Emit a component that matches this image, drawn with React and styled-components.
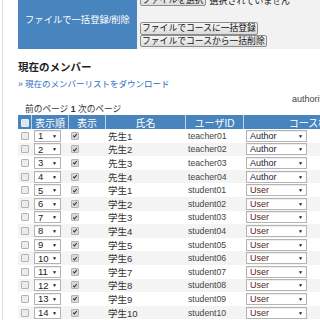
import React from 'react'
import styled, { createGlobalStyle } from 'styled-components'

const GlobalStyle = createGlobalStyle`
  html, body {
    margin: 0;
    padding: 0;
    background: #fff;
    overflow: hidden;
  }
  body {
    font-family: "Liberation Sans", "Noto Sans CJK JP", sans-serif;
    color: #333;
  }
`

const Page = styled.div`
  margin-left: 2px;
  border-left: 1px solid #dcdcdc;
  padding-left: 15px;
  width: 400px;
  min-height: 340px;
`

const Upload = styled.div`
  display: grid;
  grid-template-columns: 119px 1fr;
  margin-top: -12px;
`

const UploadLabel = styled.div`
  background: #4884be;
  color: #fff;
  font-size: 9.3px;
  display: flex;
  align-items: center;
  justify-content: center;
`

const UploadBody = styled.div`
  background: #f2f2f2;
  padding: 6px 3px 2px 3px;
`

const FileRow = styled.div`
  display: flex;
  align-items: center;
  gap: 4px;
  height: 12px;
  margin-bottom: 16px;
  font-size: 9px;
  color: #222;
`

const Button = styled.button`
  display: block;
  box-sizing: border-box;
  height: ${p => (p.$small ? '12px' : '12.5px')};
  padding: 0 1px;
  margin: 0;
  font-family: inherit;
  font-size: 8.8px;
  line-height: 10px;
  color: #111;
  border: 1px solid #8d8d8d;
  border-radius: 2px;
  background: linear-gradient(#f6f6f6, #dcdcdc);
`

const Heading = styled.h3`
  margin: 11px 0 0;
  font-size: 10.5px;
  line-height: 14px;
  font-weight: bold;
  color: #222;
`

const DownloadLink = styled.a`
  display: block;
  margin-top: 4px;
  font-size: 8.5px;
  line-height: 12px;
  color: #2c6cc0;
  text-decoration: none;
`

const AuthNote = styled.div`
  margin-top: 5px;
  padding-left: 274px;
  font-size: 9px;
  line-height: 9px;
  color: #444;
  white-space: nowrap;
`

const Pager = styled.div`
  padding-left: 7px;
  font-size: 8.7px;
  line-height: 10px;
  color: #333;
`

const Columns = '13px 37px 37px 80px 58px 140px'

const HeadRow = styled.div`
  display: grid;
  grid-template-columns: ${Columns};
  height: 14px;
  margin-top: 1px;
  background: #4884be;
`

const HeadCell = styled.div`
  display: flex;
  align-items: center;
  justify-content: center;
  color: #fff;
  font-size: 10px;
  border-left: ${p => (p.$first ? 'none' : '1px solid rgba(255,255,255,0.65)')};
`

const Row = styled.div`
  display: grid;
  grid-template-columns: ${Columns};
  height: 13.6px;
  background: ${p => (p.$alt ? '#f4f4f4' : '#fff')};
`

const Cell = styled.div`
  display: flex;
  align-items: center;
  justify-content: ${p => (p.$center ? 'center' : 'flex-start')};
  padding-left: ${p => p.$pad || 0}px;
  font-size: ${p => p.$size || 9.5}px;
  color: ${p => p.$color || '#333'};
  white-space: nowrap;
  overflow: hidden;
`

const Box = styled.span`
  box-sizing: border-box;
  display: flex;
  align-items: center;
  justify-content: center;
  width: 8px;
  height: 8px;
  border: 1px solid ${p => (p.$head ? '#e8eef5' : '#b4b4b4')};
  border-radius: 1px;
  background: ${p => (p.$head ? '#dfe5ec' : p.$checked ? '#d8d8d8' : '#ececec')};
`

const Select = styled.span`
  box-sizing: border-box;
  display: flex;
  align-items: center;
  justify-content: space-between;
  width: ${p => p.$w}px;
  height: 12px;
  padding: 0 3px;
  border: 1px solid #b4b4b4;
  background: #fff;
  font-size: ${p => p.$size || 9.5}px;
  color: ${p => p.$color || '#222'};
  box-shadow: inset 0 1px 1px rgba(0, 0, 0, 0.08);
`

const Arrow = styled.span`
  font-size: 5px;
  color: #111;
`

const Check = () => (
  <Box $checked>
    <svg width="7" height="7" viewBox="0 0 8 8">
      <path d="M1.6 4.2 L3.3 5.9 L6.4 2" fill="none" stroke="#333" strokeWidth="1.4" />
    </svg>
  </Box>
)

const members = [
  ...[1, 2, 3, 4].map(i => ({ name: '先生' + i, id: 'teacher0' + i, role: 'Author' })),
  ...[1, 2, 3, 4, 5, 6, 7, 8, 9, 10].map(i => ({
    name: '学生' + i,
    id: 'student' + String(i).padStart(2, '0'),
    role: 'User',
  })),
]

export default function App() {
  return (
    <>
      <GlobalStyle />
      <Page>
        <Upload>
          <UploadLabel>ファイルで一括登録/削除</UploadLabel>
          <UploadBody>
            <FileRow>
              <Button $small>ファイルを選択</Button>
              選択されていません
            </FileRow>
            <Button>ファイルでコースに一括登録</Button>
            <Button>ファイルでコースから一括削除</Button>
          </UploadBody>
        </Upload>

        <Heading>現在のメンバー</Heading>
        <DownloadLink href="#">» 現在のメンバーリストをダウンロード</DownloadLink>
        <AuthNote>authority</AuthNote>
        <Pager>
          前のページ <b>1</b> 次のページ
        </Pager>

        <HeadRow>
          <HeadCell $first>
            <Box $head />
          </HeadCell>
          <HeadCell>表示順</HeadCell>
          <HeadCell>表示</HeadCell>
          <HeadCell>氏名</HeadCell>
          <HeadCell>ユーザID</HeadCell>
          <HeadCell>コース権限</HeadCell>
        </HeadRow>

        {members.map((m, i) => (
          <Row key={m.id} $alt={i % 2 === 1}>
            <Cell $pad={1} $center>
              <Box />
            </Cell>
            <Cell $pad={3}>
              <Select $w={27}>
                {i + 1}
                <Arrow>▼</Arrow>
              </Select>
            </Cell>
            <Cell $pad={3}>
              <Check />
            </Cell>
            <Cell $pad={3}>{m.name}</Cell>
            <Cell $pad={3} $size={8.7} $color="#444">
              {m.id}
            </Cell>
            <Cell $pad={3}>
              <Select $w={61} $size={9} $color={m.role === 'User' ? '#5a1c1c' : '#1c1c3c'}>
                {m.role}
                <Arrow>▼</Arrow>
              </Select>
            </Cell>
          </Row>
        ))}
      </Page>
    </>
  )
}
